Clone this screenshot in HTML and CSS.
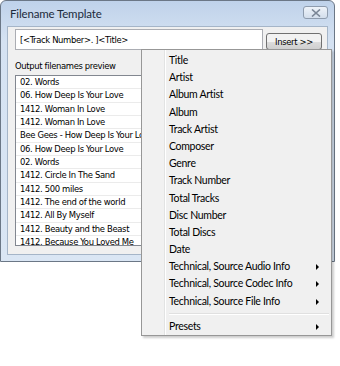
FILE: index.html
```html
<!DOCTYPE html>
<html lang="en">
<head>
    <meta charset="UTF-8">
    <title>Filename Template</title>
    <link rel="stylesheet" href="styles.css">
</head>
<body>
    <div class="window">
        <div class="titlebar">
            <span class="title">Filename Template</span>
            <span class="close-btn">
                <svg width="10" height="8" viewBox="0 0 10 8">
                    <path d="M1 0.5 L9 7.5 M9 0.5 L1 7.5" stroke="#7a8696" stroke-width="1.6" fill="none"/>
                </svg>
            </span>
        </div>
        <div class="client">
            <div class="pattern-row">
                <div class="pattern-input">[&lt;Track Number&gt;. ]&lt;Title&gt;</div>
                <button class="insert-btn">Insert &gt;&gt;</button>
            </div>
            <div class="preview-label">Output filenames preview</div>
            <div class="preview-list">
                <div class="row">02. Words</div>
                <div class="row">06. How Deep Is Your Love</div>
                <div class="row">1412. Woman In Love</div>
                <div class="row">1412. Woman In Love</div>
                <div class="row">Bee Gees - How Deep Is Your Love</div>
                <div class="row">06. How Deep Is Your Love</div>
                <div class="row">02. Words</div>
                <div class="row">1412. Circle In The Sand</div>
                <div class="row">1412. 500 miles</div>
                <div class="row">1412. The end of the world</div>
                <div class="row">1412. All By Myself</div>
                <div class="row">1412. Beauty and the Beast</div>
                <div class="row">1412. Because You Loved Me</div>
            </div>
        </div>
    </div>

    <div class="menu">
        <div class="item">Title</div>
        <div class="item">Artist</div>
        <div class="item">Album Artist</div>
        <div class="item">Album</div>
        <div class="item">Track Artist</div>
        <div class="item">Composer</div>
        <div class="item">Genre</div>
        <div class="item">Track Number</div>
        <div class="item">Total Tracks</div>
        <div class="item">Disc Number</div>
        <div class="item">Total Discs</div>
        <div class="item">Date</div>
        <div class="item sub">Technical, Source Audio Info</div>
        <div class="item sub">Technical, Source Codec Info</div>
        <div class="item sub">Technical, Source File Info</div>
        <div class="separator"></div>
        <div class="item sub">Presets</div>
    </div>
</body>
</html>
```

FILE: styles.css
```css
body {
    margin: 0;
    background-color: #fff;
    font-family: "DejaVu Sans Condensed", "DejaVu Sans", sans-serif;
    font-size: 9.4px;
    letter-spacing: -0.35px;
    color: #000;
}
.window {
    width: 335px;
    height: 262px;
    box-sizing: border-box;
    border: 1px solid #6b7786;
    border-radius: 6px 6px 0 0;
    background: linear-gradient(to bottom, #bfd2ea, #d5e2f2 40px, #dae6f4);
    padding: 0 6px 6px 6px;
    display: flex;
    flex-direction: column;
}
.titlebar {
    height: 25px;
    display: flex;
    align-items: center;
    justify-content: space-between;
    padding-left: 3px;
}
.title {
    font-family: Lato, "Liberation Sans", sans-serif;
    font-size: 11.5px;
    letter-spacing: -0.15px;
    color: #1b2a3c;
}
.close-btn {
    width: 23px;
    height: 11px;
    margin-top: -2px;
    border: 1px solid #8e9cae;
    border-radius: 3px;
    background: linear-gradient(to bottom, #eef3f9, #d3deec);
    display: flex;
    align-items: center;
    justify-content: center;
}
.client {
    flex: 1;
    background-color: #f0f0f0;
    border: 1px solid #a5b5c8;
    padding: 2px 5px 0 7px;
}
.pattern-row {
    display: flex;
    align-items: flex-end;
    gap: 3px;
}
.pattern-input {
    width: 248px;
    height: 21px;
    box-sizing: border-box;
    background-color: #fff;
    border: 1px solid #abadb3;
    padding: 0 4px;
    line-height: 19px;
}
.insert-btn {
    width: 56px;
    height: 17px;
    padding: 0;
    font-family: "DejaVu Sans Condensed", "DejaVu Sans", sans-serif;
    font-size: 9.4px;
    letter-spacing: -0.35px;
    color: #000;
    border: 1px solid #707070;
    border-radius: 3px;
    background: linear-gradient(to bottom, #f2f2f2 50%, #dddddd 50%, #cfcfcf);
}
.preview-label {
    margin-top: 9px;
    height: 16px;
    line-height: 14px;
}
.preview-list {
    height: 171px;
    box-sizing: border-box;
    overflow: hidden;
    background-color: #fff;
    border: 1px solid #828790;
    width: 308px;
}
.row {
    height: 12.33px;
    line-height: 12px;
    border-bottom: 1px solid #ebebeb;
    padding-left: 4px;
    white-space: nowrap;
}
.menu {
    position: absolute;
    left: 141px;
    top: 49px;
    width: 191px;
    height: 287px;
    box-sizing: border-box;
    border: 1px solid #979797;
    background: linear-gradient(to right, #f1f1f1 22px, #e2e3e3 22px, #e2e3e3 23px, #fff 23px, #fff 24px, #f0f0f0 24px);
    padding: 2px;
    box-shadow: 2px 2px 2px rgba(0, 0, 0, 0.2);
    font-family: Lato, "Liberation Sans", sans-serif;
    font-size: 10.5px;
    letter-spacing: -0.3px;
}
.item {
    height: 17.2px;
    line-height: 17.2px;
    padding-left: 25px;
    position: relative;
    white-space: nowrap;
}
.item.sub::after {
    content: "";
    position: absolute;
    right: 10px;
    top: 6px;
    border-left: 3px solid #000;
    border-top: 3px solid transparent;
    border-bottom: 3px solid transparent;
}
.separator {
    height: 1px;
    margin: 3px 0 2.8px 25px;
    background-color: #e0e0e0;
    border-bottom: 1px solid #fff;
}
```
